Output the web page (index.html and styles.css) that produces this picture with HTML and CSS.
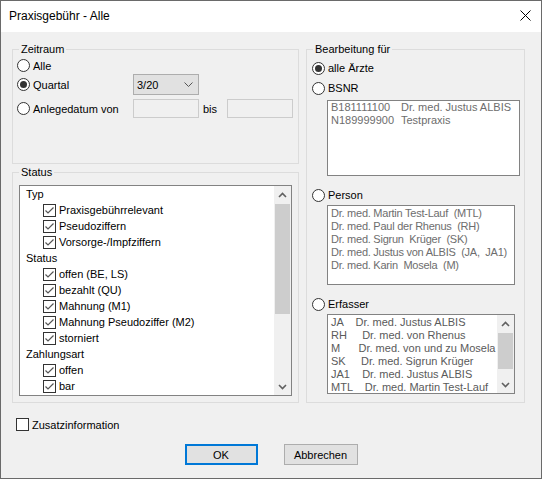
FILE: index.html
```html
<!DOCTYPE html>
<html lang="de">
<head>
<meta charset="utf-8">
<title>Praxisgebühr - Alle</title>
<link rel="stylesheet" href="styles.css">
</head>
<body>
<div class="window">
  <div class="titlebar">
    <span class="title">Praxisgebühr - Alle</span>
    <span class="close"><svg width="11" height="11" viewBox="0 0 11 11"><path d="M0.5 0.5 L10.5 10.5 M10.5 0.5 L0.5 10.5" stroke="#000" stroke-width="1" fill="none"/></svg></span>
  </div>
  <div class="client">
    <div class="columns">
      <div class="leftcol">
        <fieldset class="group">
          <legend>Zeitraum</legend>
          <div class="zeitraum">
            <div class="zrow r1">
              <label class="radio zlabel"><span class="rb"></span>Alle</label>
            </div>
            <div class="zrow r2">
              <label class="radio zlabel"><span class="rb on"></span>Quartal</label>
              <div class="combo"><span>3/20</span><svg width="9" height="5" viewBox="0 0 9 5"><polyline points="0.5,0.5 4.5,4.5 8.5,0.5" fill="none" stroke="#555" stroke-width="1"/></svg></div>
            </div>
            <div class="zrow r3">
              <label class="radio zlabel"><span class="rb"></span>Anlegedatum von</label>
              <div class="textbox"></div>
              <span class="bis">bis</span>
              <div class="textbox"></div>
            </div>
          </div>
        </fieldset>
        <fieldset class="group">
          <legend>Status</legend>
          <div class="status">
            <div class="listbox statuslist">
              <div class="items">
                <div class="li h">Typ</div>
                <div class="li c"><span class="cb"><svg width="11" height="11" viewBox="0 0 11 11"><polyline points="1.5,5.5 4,8 9.5,2.5" fill="none" stroke="#555" stroke-width="1.2"/></svg></span>Praxisgebührrelevant</div>
                <div class="li c"><span class="cb"><svg width="11" height="11" viewBox="0 0 11 11"><polyline points="1.5,5.5 4,8 9.5,2.5" fill="none" stroke="#555" stroke-width="1.2"/></svg></span>Pseudoziffern</div>
                <div class="li c"><span class="cb"><svg width="11" height="11" viewBox="0 0 11 11"><polyline points="1.5,5.5 4,8 9.5,2.5" fill="none" stroke="#555" stroke-width="1.2"/></svg></span>Vorsorge-/Impfziffern</div>
                <div class="li h">Status</div>
                <div class="li c"><span class="cb"><svg width="11" height="11" viewBox="0 0 11 11"><polyline points="1.5,5.5 4,8 9.5,2.5" fill="none" stroke="#555" stroke-width="1.2"/></svg></span>offen (BE, LS)</div>
                <div class="li c"><span class="cb"><svg width="11" height="11" viewBox="0 0 11 11"><polyline points="1.5,5.5 4,8 9.5,2.5" fill="none" stroke="#555" stroke-width="1.2"/></svg></span>bezahlt (QU)</div>
                <div class="li c"><span class="cb"><svg width="11" height="11" viewBox="0 0 11 11"><polyline points="1.5,5.5 4,8 9.5,2.5" fill="none" stroke="#555" stroke-width="1.2"/></svg></span>Mahnung (M1)</div>
                <div class="li c"><span class="cb"><svg width="11" height="11" viewBox="0 0 11 11"><polyline points="1.5,5.5 4,8 9.5,2.5" fill="none" stroke="#555" stroke-width="1.2"/></svg></span>Mahnung Pseudoziffer (M2)</div>
                <div class="li c"><span class="cb"><svg width="11" height="11" viewBox="0 0 11 11"><polyline points="1.5,5.5 4,8 9.5,2.5" fill="none" stroke="#555" stroke-width="1.2"/></svg></span>storniert</div>
                <div class="li h">Zahlungsart</div>
                <div class="li c"><span class="cb"><svg width="11" height="11" viewBox="0 0 11 11"><polyline points="1.5,5.5 4,8 9.5,2.5" fill="none" stroke="#555" stroke-width="1.2"/></svg></span>offen</div>
                <div class="li c"><span class="cb"><svg width="11" height="11" viewBox="0 0 11 11"><polyline points="1.5,5.5 4,8 9.5,2.5" fill="none" stroke="#555" stroke-width="1.2"/></svg></span>bar</div>
              </div>
              <div class="vscroll">
                <div class="sbtn"><svg width="9" height="6" viewBox="0 0 9 6"><polyline points="1,5 4.5,1.5 8,5" fill="none" stroke="#606060" stroke-width="1.6"/></svg></div>
                <div class="track"><div class="thumb big"></div></div>
                <div class="sbtn"><svg width="9" height="6" viewBox="0 0 9 6"><polyline points="1,1 4.5,4.5 8,1" fill="none" stroke="#606060" stroke-width="1.6"/></svg></div>
              </div>
            </div>
          </div>
        </fieldset>
      </div>
      <fieldset class="group">
        <legend>Bearbeitung für</legend>
        <div class="bearbeitung">
          <label class="radio rrow"><span class="rb on"></span>alle Ärzte</label>
          <label class="radio rrow gap4"><span class="rb"></span>BSNR</label>
          <div class="listbox plain bsnr">
            <div class="items gray">
              <div class="li2 cols"><span class="k">B181111100</span><span>Dr. med. Justus ALBIS</span></div>
              <div class="li2 cols"><span class="k">N189999900</span><span>Testpraxis</span></div>
            </div>
          </div>
          <label class="radio rrow gap11"><span class="rb"></span>Person</label>
          <div class="listbox plain person">
            <div class="items gray pt1 tight">
              <div class="li2">Dr. med. Martin Test-Lauf  (MTL)</div>
              <div class="li2">Dr. med. Paul der Rhenus  (RH)</div>
              <div class="li2">Dr. med. Sigrun  Krüger  (SK)</div>
              <div class="li2">Dr. med. Justus von ALBIS  (JA,  JA1)</div>
              <div class="li2">Dr. med. Karin  Mosela  (M)</div>
            </div>
          </div>
          <label class="radio rrow gap11"><span class="rb"></span>Erfasser</label>
          <div class="listbox plain person">
            <div class="items gray2 pt1">
              <div class="li2">JA    Dr. med. Justus ALBIS</div>
              <div class="li2">RH     Dr. med. von Rhenus</div>
              <div class="li2">M      Dr. med. von und zu Mosela</div>
              <div class="li2">SK     Dr. med. Sigrun Krüger</div>
              <div class="li2">JA1    Dr. med. Justus ALBIS</div>
              <div class="li2">MTL    Dr. med. Martin Test-Lauf</div>
            </div>
            <div class="vscroll">
              <div class="sbtn"><svg width="9" height="6" viewBox="0 0 9 6"><polyline points="1,5 4.5,1.5 8,5" fill="none" stroke="#606060" stroke-width="1.6"/></svg></div>
              <div class="track"><div class="thumb small"></div></div>
              <div class="sbtn"><svg width="9" height="6" viewBox="0 0 9 6"><polyline points="1,1 4.5,4.5 8,1" fill="none" stroke="#606060" stroke-width="1.6"/></svg></div>
            </div>
          </div>
        </div>
      </fieldset>
    </div>
    <label class="chkrow"><span class="cb dark"></span>Zusatzinformation</label>
    <div class="buttons">
      <button class="btn default" type="button">OK</button>
      <button class="btn cancel" type="button">Abbrechen</button>
    </div>
  </div>
</div>
</body>
</html>
```
FILE: styles.css
```css
* { box-sizing: border-box; }
html, body { margin: 0; padding: 0; }
body {
  width: 542px;
  height: 479px;
  overflow: hidden;
  font-family: "Liberation Sans", Arial, sans-serif;
  font-size: 11px;
  color: #000;
  background: #f0f0f0;
}
.window {
  width: 542px;
  height: 479px;
  border: 1px solid #6a6a6a;
  background: #f0f0f0;
  display: flex;
  flex-direction: column;
}
.titlebar {
  flex: none;
  height: 31px;
  background: #fff;
  display: flex;
  align-items: center;
  justify-content: space-between;
  padding: 0 10px 2px 8px;
}
.title { font-size: 12px; }
.close { display: flex; width: 11px; height: 11px; }
.client { padding: 11px 16px 0 11px; }
.columns {
  display: grid;
  grid-template-columns: 287px 219px;
  column-gap: 7px;
}
.leftcol { display: flex; flex-direction: column; gap: 2px; }
fieldset.group {
  margin: 0;
  padding: 0;
  min-width: 0;
  border: 1px solid #dcdcdc;
}
legend {
  margin-left: 6px;
  padding: 0 2px;
  font-size: 11px;
  line-height: 13px;
}
.radio { display: flex; align-items: center; gap: 3px; white-space: nowrap; }
.rb {
  flex: none;
  width: 13px;
  height: 13px;
  border: 1px solid #333;
  border-radius: 50%;
  background: #fff;
  display: flex;
  align-items: center;
  justify-content: center;
}
.rb.on::before {
  content: "";
  width: 7px;
  height: 7px;
  border-radius: 50%;
  background: #333;
}
.cb {
  flex: none;
  width: 13px;
  height: 13px;
  border: 1px solid #333;
  background: #fff;
  display: flex;
}

/* Zeitraum */
.zeitraum { padding: 1px 0 45px 4px; }
.zrow { display: flex; align-items: center; }
.zrow.r1 { height: 17px; }
.zrow.r2 { height: 21px; }
.zrow.r3 { height: 19px; margin-top: 4px; }
.zlabel { flex: 0 0 116px; }
.combo {
  width: 66px;
  height: 21px;
  border: 1px solid #adadad;
  background: #e1e1e1;
  display: flex;
  align-items: center;
  justify-content: space-between;
  padding: 0 5px 0 3px;
}
.textbox {
  width: 66px;
  height: 19px;
  border: 1px solid #cccccc;
  background: #f0f0f0;
}
.bis { width: 28px; padding-left: 4px; }

/* Status */
.status { padding: 6px 6px 6px 6px; }
.listbox {
  border: 1px solid #828282;
  background: #fff;
  display: flex;
  overflow: hidden;
}
.statuslist { height: 211px; }
.items { flex: 1; min-width: 0; overflow: hidden; }
.li { height: 16px; display: flex; align-items: center; white-space: nowrap; }
.li.h { padding-left: 6px; }
.li.c { padding-left: 23px; gap: 3px; }
.vscroll {
  flex: none;
  width: 17px;
  background: #f0f0f0;
  display: flex;
  flex-direction: column;
}
.sbtn {
  flex: none;
  height: 17px;
  display: flex;
  align-items: center;
  justify-content: center;
}
.track { flex: 1; padding: 1px 1px 0; }
.thumb { background: #cdcdcd; }
.thumb.big { height: 110px; }
.thumb.small { height: 36px; }

/* Bearbeitung */
.bearbeitung {
  padding: 4px 0 8px 5px;
  display: flex;
  flex-direction: column;
}
.rrow { height: 16px; }
.gap4 { margin-top: 4px; }
.gap11 { margin-top: 11px; }
.listbox.plain { margin-left: 15px; }
.bsnr { width: 193px; height: 76px; margin-top: 4px; }
.person { width: 188px; height: 80px; margin-top: 2px; }
.li2 { height: 13px; line-height: 13px; white-space: pre; padding-left: 3px; }
.tight .li2 { letter-spacing: -0.25px; }
.cols { display: flex; }
.cols .k { width: 70px; }
.gray { color: #6d6d6d; }
.gray2 { color: #5a5a5a; }
.pt1 { padding-top: 1px; }

/* Footer */
.chkrow {
  display: flex;
  align-items: center;
  gap: 3px;
  height: 13px;
  margin: 15px 0 0 4px;
}
.cb.dark { border-color: #333; }
.buttons {
  display: flex;
  justify-content: center;
  gap: 26px;
  margin: 13px -16px 0 -11px;
}
.btn {
  height: 21px;
  margin: 0;
  padding: 0;
  font-family: "Liberation Sans", Arial, sans-serif;
  font-size: 11px;
  color: #000;
  background: #e1e1e1;
  border: 1px solid #adadad;
  display: flex;
  align-items: center;
  justify-content: center;
}
.btn.default { width: 73px; border: 2px solid #0078d7; }
.btn.cancel { width: 74px; }
```
